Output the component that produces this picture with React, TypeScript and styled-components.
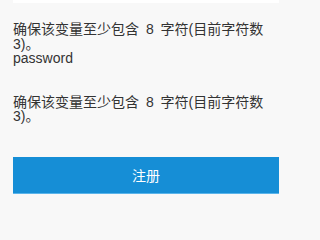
import * as React from "react"
import styled, { createGlobalStyle } from "styled-components"

const GlobalStyle = createGlobalStyle`
    html, body {
        margin: 0;
        padding: 0;
        background: #f8f8f8;
    }
    body {
        font-family: "Liberation Sans", Arial, "Noto Sans CJK SC", sans-serif;
    }
`

const Form = styled.div`
    width: 266px;
    padding: 0 26px 0 13px;
    display: flex;
    flex-direction: column;
`

const InputTail = styled.div`
    height: 3px;
    background: #ffffff;
`

const Field = styled.div`
    display: flex;
    flex-direction: column;
`

const ErrorText = styled.div<{ top: number }>`
    margin-top: ${p => p.top}px;
    font-size: 14px;
    line-height: 14.5px;
    word-spacing: 3px;
    color: #333333;
`

const Label = styled.div`
    font-size: 14px;
    line-height: 14.5px;
    color: #333333;
`

const SubmitButton = styled.button`
    margin-top: 33px;
    height: 37px;
    width: 100%;
    border: none;
    border-bottom: 1px solid #5ab4ea;
    background: #168ed6;
    color: #ffffff;
    font-family: "Liberation Sans", Arial, "Noto Sans CJK SC", sans-serif;
    font-size: 14px;
    padding: 0;
    cursor: pointer;
`

const ErrorMessage = ({ top }: { top: number }) => (
    <ErrorText top={top}>确保该变量至少包含 8 字符(目前字符数 3)。</ErrorText>
)

export default function App(): JSX.Element {
    return (
        <>
            <GlobalStyle />
            <Form>
                <InputTail />
                <Field>
                    <ErrorMessage top={19} />
                    <Label>password</Label>
                </Field>
                <Field>
                    <ErrorMessage top={29} />
                </Field>
                <SubmitButton>注册</SubmitButton>
            </Form>
        </>
    )
}
